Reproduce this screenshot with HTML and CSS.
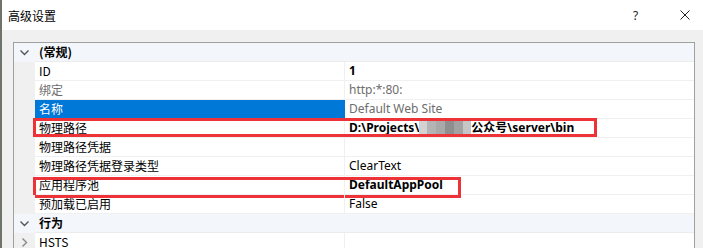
FILE: index.html
```html
<!DOCTYPE html>
<html lang="zh-CN">
<head>
    <meta charset="UTF-8">
    <title>高级设置</title>
    <link rel="stylesheet" href="styles.css">
</head>
<body>
    <div class="window">
        <div class="titlebar">
            <span class="title">高级设置</span>
            <span class="help">?</span>
            <svg class="close" width="10" height="10" viewBox="0 0 10 10"><path d="M0.5 0.5L9.5 9.5M9.5 0.5L0.5 9.5" stroke="#222" stroke-width="1"/></svg>
        </div>

        <div class="body">
            <div class="grid">
                <div class="row category">
                    <div class="gutter"><svg width="9" height="6" viewBox="0 0 9 6"><path d="M0.5 0.5L4.5 4.5L8.5 0.5" fill="none" stroke="#555" stroke-width="1.4"/></svg></div>
                    <div class="cat-name">(常规)</div>
                </div>
                <div class="row">
                    <div class="gutter"></div>
                    <div class="name">ID</div>
                    <div class="value bold">1</div>
                </div>
                <div class="row">
                    <div class="gutter"></div>
                    <div class="name muted">绑定</div>
                    <div class="value muted">http:*:80:</div>
                </div>
                <div class="row">
                    <div class="gutter"></div>
                    <div class="name selected">名称</div>
                    <div class="value muted">Default Web Site</div>
                </div>
                <div class="row">
                    <div class="gutter"></div>
                    <div class="name">物理路径</div>
                    <div class="value bold">D:\Projects\<span class="mosaic"></span>公众号\server\bin</div>
                    <div class="mark mark-path"></div>
                </div>
                <div class="row">
                    <div class="gutter"></div>
                    <div class="name">物理路径凭据</div>
                    <div class="value"></div>
                </div>
                <div class="row">
                    <div class="gutter"></div>
                    <div class="name">物理路径凭据登录类型</div>
                    <div class="value">ClearText</div>
                </div>
                <div class="row">
                    <div class="gutter"></div>
                    <div class="name">应用程序池</div>
                    <div class="value bold">DefaultAppPool</div>
                    <div class="mark mark-pool"></div>
                </div>
                <div class="row">
                    <div class="gutter"></div>
                    <div class="name">预加载已启用</div>
                    <div class="value">False</div>
                </div>
                <div class="row category">
                    <div class="gutter"><svg width="9" height="6" viewBox="0 0 9 6"><path d="M0.5 0.5L4.5 4.5L8.5 0.5" fill="none" stroke="#555" stroke-width="1.4"/></svg></div>
                    <div class="cat-name">行为</div>
                </div>
                <div class="row">
                    <div class="gutter"><svg width="6" height="9" viewBox="0 0 6 9"><path d="M0.5 0.5L4.5 4.5L0.5 8.5" fill="none" stroke="#888" stroke-width="1.4"/></svg></div>
                    <div class="name">HSTS</div>
                    <div class="value"></div>
                </div>
            </div>
        </div>
    </div>
</body>
</html>
```

FILE: styles.css
```css
html, body { margin: 0; height: 248px; overflow: hidden; }
body { font-family: "Noto Sans", "Noto Sans CJK SC", sans-serif; font-size: 12px; color: #000; background: #f0f0f0; }
.window { border-left: 2px solid #6f746a; height: 248px; box-sizing: border-box; }
.titlebar { height: 30px; background: #fff; display: flex; align-items: center; padding-left: 6px; }
.title { flex: 1; font-family: "Noto Sans CJK SC", sans-serif; font-size: 12px; color: #000; }
.help { width: 10px; margin-right: 37px; font-size: 12px; color: #222; }
.close { margin-right: 13px; }
.body { padding: 12px 8px 0 11px; }
.grid { border: 1px solid #a0a0a0; border-bottom: none; background: #fff; }
.row { position: relative; display: grid; grid-template-columns: 21px 310px 1fr; height: 19px; line-height: 18px; }
.gutter { background: #f0f0f0; display: flex; align-items: center; justify-content: center; height: 19px; }
.name { padding-left: 4px; border-right: 1px solid #f0f0f0; border-bottom: 1px solid #f0f0f0; font-family: "Noto Sans CJK SC", sans-serif; white-space: nowrap; }
.value { padding-left: 4px; border-bottom: 1px solid #f0f0f0; white-space: nowrap; }
.category { background: #f3f6fb; }
.category .gutter { background: #f3f6fb; }
.cat-name { grid-column: 2 / 4; padding-left: 4px; font-weight: bold; font-family: "Noto Sans CJK SC", sans-serif; border-bottom: 1px solid #ececec; }
.bold { font-weight: bold; }
.muted { color: #6d6d6d; }
.name.muted { color: #6d6d6d; }
.selected { background: #0078d7; color: #fff; border-color: #0078d7; }
.mosaic { display: inline-block; width: 52px; height: 13px; vertical-align: -2px; background:
    linear-gradient(to right, #d2d2d2 0 8px, #b4b4b4 8px 17px, #a9a9a9 17px 26px, #8f8f8f 26px 35px, #a2a2a2 35px 44px, #c6c6c6 44px 52px); }
.mark { position: absolute; border: 3px solid #ee3338; box-sizing: border-box; pointer-events: none; }
.mark-path { left: 19px; top: -1px; width: 564px; height: 19px; }
.mark-pool { left: 19px; top: 1px; width: 428px; height: 21px; }
```
